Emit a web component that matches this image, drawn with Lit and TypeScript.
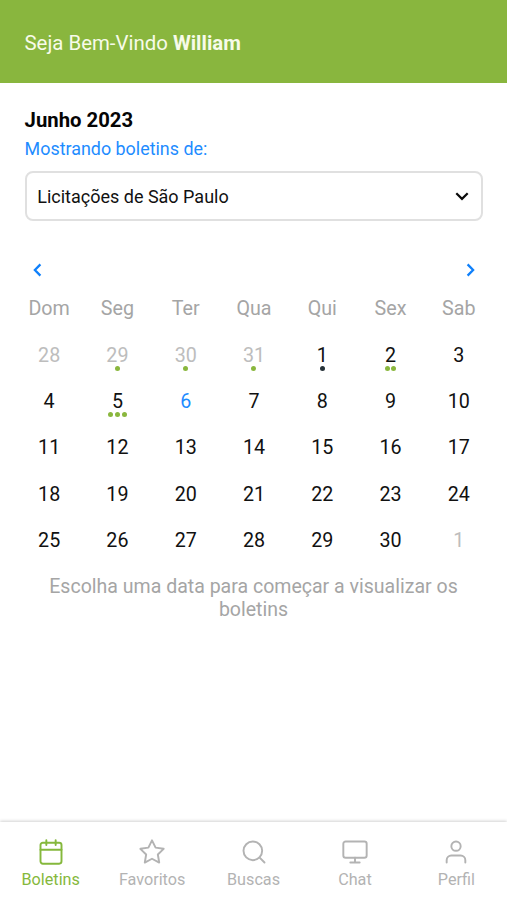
import { LitElement, html, css, svg } from "lit";
import { customElement, property } from "lit/decorators.js";

type Day = { n: number; tone?: "out" | "today"; dots?: string[] };

const G = "green";
const WEEKDAYS = ["Dom", "Seg", "Ter", "Qua", "Qui", "Sex", "Sab"];

const MARKED: Record<number, string[]> = { 1: ["dark"], 2: [G, G], 5: [G, G, G] };

const DAYS: Day[] = [
  { n: 28, tone: "out" },
  { n: 29, tone: "out", dots: [G] },
  { n: 30, tone: "out", dots: [G] },
  { n: 31, tone: "out", dots: [G] },
  ...Array.from({ length: 30 }, (_, i): Day => ({
    n: i + 1,
    tone: i + 1 === 6 ? "today" : undefined,
    dots: MARKED[i + 1],
  })),
  { n: 1, tone: "out" },
];

const ICONS = {
  calendar: svg`<rect x="3" y="4" width="18" height="18" rx="2"/><path d="M16 2v4M8 2v4M3 10h18"/>`,
  star: svg`<path d="M12 2l3.09 6.26L22 9.27l-5 4.87 1.18 6.88L12 17.77l-6.18 3.25L7 14.14 2 9.27l6.91-1.01z"/>`,
  search: svg`<circle cx="11" cy="11" r="8"/><path d="M21 21l-4.35-4.35"/>`,
  monitor: svg`<rect x="2" y="3" width="20" height="14" rx="2"/><path d="M8 21h8M12 17v4"/>`,
  user: svg`<path d="M20 21v-2a4 4 0 0 0-4-4H8a4 4 0 0 0-4 4v2"/><circle cx="12" cy="7" r="4"/>`,
};

@customElement("month-calendar")
export class MonthCalendar extends LitElement {
  static styles = css`
    :host { display: block; padding: 0 14px 0 15px; }
    .nav { display: flex; justify-content: space-between; padding: 0 13px 0 12px; height: 20px; align-items: center; }
    .nav svg { width: 19px; height: 20px; fill: none; stroke: #0f80fb; stroke-width: 2.3; display: block; }
    .grid { display: grid; grid-template-columns: repeat(7, 1fr); text-align: center; }
    .week { margin-top: 17px; color: #a5a5a5; font-size: 19.7px; line-height: 24px; }
    .days { margin-top: 10.6px; grid-auto-rows: 46.4px; font-size: 19.7px; color: #111; }
    .day { display: flex; flex-direction: column; align-items: center; padding-top: 12px; line-height: 24px; box-sizing: border-box; }
    .out { color: #bdbdbd; }
    .today { color: #1e8cff; }
    .dots { display: flex; gap: 1.6px; margin-top: -1.7px; }
    .dot { width: 5px; height: 5px; border-radius: 50%; background: #8ab73e; }
    .dark { background: #263238; }
  `;

  render() {
    return html`
      <div class="nav">
        <svg viewBox="0 0 19 20"><path d="M13.4 4.4 7.9 10l5.5 5.6"/></svg>
        <svg viewBox="0 0 19 20"><path d="M6.6 4.4 12.1 10l-5.5 5.6"/></svg>
      </div>
      <div class="grid week">${WEEKDAYS.map((d) => html`<div>${d}</div>`)}</div>
      <div class="grid days">
        ${DAYS.map(
          (d) => html`<div class="day ${d.tone ?? ""}">
            <span>${d.n}</span>
            ${d.dots ? html`<div class="dots">${d.dots.map((c) => html`<i class="dot ${c}"></i>`)}</div>` : ""}
          </div>`
        )}
      </div>
    `;
  }
}

@customElement("tab-item")
export class TabItem extends LitElement {
  @property() icon: keyof typeof ICONS = "calendar";
  @property() label = "";

  static styles = css`
    :host { display: flex; flex-direction: column; align-items: center; flex: 1 1 0; padding-top: 15.5px; color: #b3b3b3; }
    :host([active]) { color: #85b83c; }
    svg { width: 28px; height: 28px; display: block; fill: none; stroke: currentColor; stroke-width: 1.65; stroke-linecap: round; stroke-linejoin: round; }
    .label { margin-top: 4px; font-size: 16.2px; line-height: 20px; }
  `;

  render() {
    return html`<svg viewBox="0 0 24 24">${ICONS[this.icon]}</svg><span class="label">${this.label}</span>`;
  }
}

@customElement("app-root")
export class AppRoot extends LitElement {
  static styles = css`
    :host { display: flex; flex-direction: column; height: 100vh; overflow: hidden; background: #fff; font-family: Roboto, sans-serif; }
    .header { flex: none; height: 83px; box-sizing: border-box; padding: 29px 24.5px 0; background: #89b63e; color: #f7fbe9; font-size: 20.4px; line-height: 28px; }
    .header b { font-weight: 700; }
    .filter { padding: 25px 24px 0 24.6px; }
    .month { margin: 0; font-size: 20.3px; line-height: 24px; font-weight: 700; color: #050505; }
    .hint { margin: 6px 0 0; font-size: 17.9px; line-height: 22px; color: #1e8cff; }
    .select { margin-top: 11px; height: 50px; box-sizing: border-box; border: 2px solid #e0e0e0; border-radius: 8px; display: flex; align-items: center; justify-content: space-between; padding: 0 9px 0 10.6px; font-size: 18px; color: #111; }
    .select svg { width: 20px; height: 20px; fill: none; stroke: #0a0a0a; stroke-width: 2.2; }
    month-calendar { margin-top: 39px; }
    .empty { margin: 11.4px 40px 0; text-align: center; font-size: 19.55px; line-height: 23px; color: #a5a5a5; }
    .tabs { margin-top: auto; flex: none; height: 78px; display: flex; background: #fff; box-shadow: 0 -1px 3px rgba(0, 0, 0, .18); }
  `;

  render() {
    return html`
      <header class="header">Seja Bem-Vindo <b>William</b></header>
      <section class="filter">
        <h1 class="month">Junho 2023</h1>
        <p class="hint">Mostrando boletins de:</p>
        <div class="select">
          <span>Licitações de São Paulo</span>
          <svg viewBox="0 0 20 20"><path d="M4.3 7.2 10 12.9l5.7-5.7"/></svg>
        </div>
      </section>
      <month-calendar></month-calendar>
      <p class="empty">Escolha uma data para começar a visualizar os boletins</p>
      <nav class="tabs">
        <tab-item active icon="calendar" label="Boletins"></tab-item>
        <tab-item icon="star" label="Favoritos"></tab-item>
        <tab-item icon="search" label="Buscas"></tab-item>
        <tab-item icon="monitor" label="Chat"></tab-item>
        <tab-item icon="user" label="Perfil"></tab-item>
      </nav>
    `;
  }
}
